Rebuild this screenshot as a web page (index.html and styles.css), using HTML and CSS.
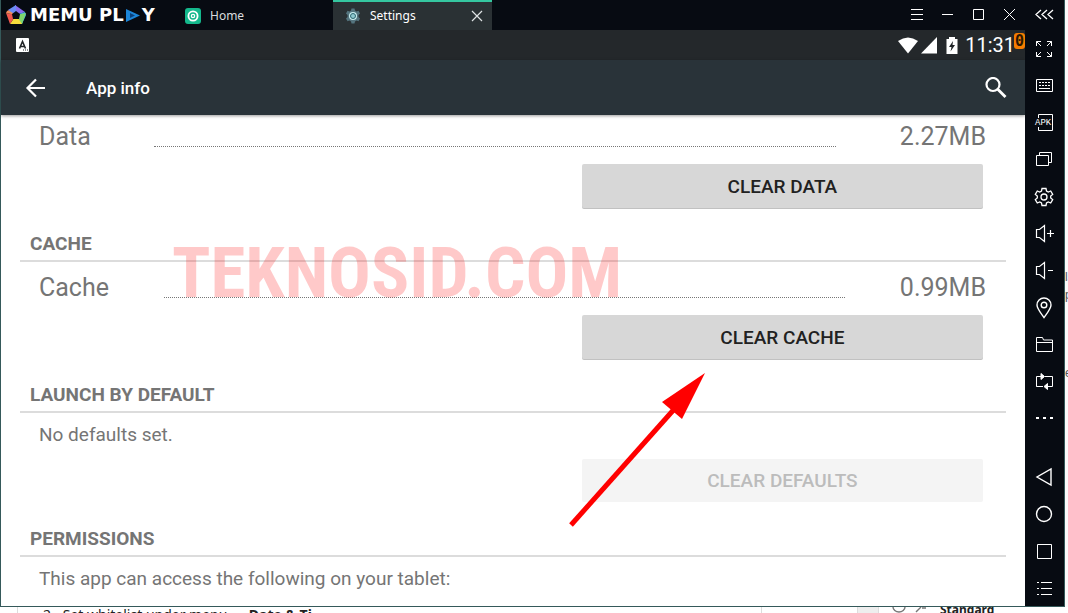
FILE: index.html
```html
<!DOCTYPE html>
<html lang="en">
<head>
    <meta charset="UTF-8">
    <meta name="viewport" content="width=device-width, initial-scale=1.0">
    <link rel="stylesheet" href="styles.css">
    <title>App info</title>
</head>
<body>
    <div class="desktop">
        <div class="window">
            <div class="main">
                <header class="titlebar">
                    <div class="brand">
                        <svg class="brand-logo" width="22" height="22" viewBox="0 0 22 22">
                            <path d="M11 11L10 1L20 8Z" fill="#8b6cf0"/>
                            <path d="M11 11L20 8L21 11L17 20Z" fill="#46b4ef"/>
                            <path d="M11 11L21 9L17 20L14 20Z" fill="#7ed66b"/>
                            <path d="M11 11L17 20L5 20Z" fill="#f6dc3c"/>
                            <path d="M11 11L5 20L1 9Z" fill="#f0574e"/>
                            <path d="M11 11L1 9L2 7L6 5Z" fill="#f08a5a"/>
                            <path d="M11 11L3 6L11 1Z" fill="#6a8cf5"/>
                            <path d="M11 7L15 10L14 15H8L7 10Z" fill="#070b12"/>
                        </svg>
                        <span class="brand-name">MEMU&nbsp;PL<svg width="14" height="13" viewBox="0 0 14 13"><path d="M0 0L14 6.5L0 13Z" fill="#1c86d9"/><path d="M4 4L9 6.5L4 9Z" fill="#0b3f78"/></svg>Y</span>
                    </div>
                    <nav class="tabs">
                        <button type="button" class="tab">
                            <svg width="16" height="16" viewBox="0 0 16 16">
                                <rect width="16" height="16" rx="3" fill="#14b88c"/>
                                <circle cx="8" cy="8" r="5.5" fill="#fff"/>
                                <circle cx="8" cy="8" r="3" fill="none" stroke="#14b88c" stroke-width="1.4"/>
                                <circle cx="8" cy="8" r="1" fill="#14b88c"/>
                            </svg>
                            <span>Home</span>
                        </button>
                        <button type="button" class="tab active">
                            <svg width="16" height="16" viewBox="0 0 16 16">
                                <path d="M6.5 .5h3l.5 2 1.5.9 2-.6 1.5 2.6-1.5 1.5v2.2l1.5 1.5-1.5 2.6-2-.6-1.5.9-.5 2h-3l-.5-2-1.5-.9-2 .6L1 10.6l1.5-1.5V6.9L1 5.4l1.5-2.6 2 .6L6 2.5z" fill="#54747e"/>
                                <circle cx="8" cy="8" r="4" fill="#c9eef0"/>
                                <circle cx="8" cy="8" r="2.5" fill="#8fc9cf" stroke="#2d6670"/>
                            </svg>
                            <span>Settings</span>
                            <svg class="tab-close" width="12" height="12" viewBox="0 0 12 12"><path d="M1 1L11 11M11 1L1 11" stroke="#dfe3e4" stroke-width="1.2"/></svg>
                        </button>
                    </nav>
                    <div class="controls">
                        <button type="button" aria-label="Menu"><svg width="14" height="14" viewBox="0 0 14 14"><path d="M2 1.5h12M2 6.5h12M2 11.5h12"/></svg></button>
                        <button type="button" aria-label="Minimize"><svg width="14" height="14" viewBox="0 0 14 14"><path d="M2 6.5h11"/></svg></button>
                        <button type="button" aria-label="Maximize"><svg width="14" height="14" viewBox="0 0 14 14"><path d="M2.5 1.5h10v10h-10z"/></svg></button>
                        <button type="button" aria-label="Close"><svg width="14" height="14" viewBox="0 0 14 14"><path d="M2 1L13 12M13 1L2 12"/></svg></button>
                    </div>
                </header>

                <div class="statusbar">
                    <svg width="13" height="14" viewBox="0 0 13 14">
                        <rect width="13" height="14" rx="1" fill="#fff"/>
                        <path d="M3.5 10.5L6.500 3.500L9.500 10.500M4.500 8.500h4" fill="none" stroke="#202427" stroke-width="1.600"/>
                        <path d="M7 12h1M9 12h1M11 12h1" stroke="#202427"/>
                    </svg>
                    <div class="status-icons">
                        <svg width="20" height="17" viewBox="0 0 20 17"><path d="M0 4Q10-3 20 4L10 16.500Z" fill="#fff"/></svg>
                        <svg width="16" height="17" viewBox="0 0 16 17"><path d="M16 0V16.500H0Z" fill="#fff"/></svg>
                        <svg class="battery" width="12" height="17" viewBox="0 0 12 17"><path d="M3 2V0h6v2h2.500v15H.5V2Z" fill="#fff"/><path d="M7 4L3 10h2.500L4.500 14.500L9 8H6.500Z" fill="#202427"/></svg>
                        <span class="clock">11:31</span>
                        <span class="fps">0</span>
                    </div>
                </div>

                <div class="actionbar">
                    <button type="button" aria-label="Back"><svg width="20" height="20" viewBox="0 0 20 20"><path d="M20 10H3M11 1.500L2.500 10L11 18.500" fill="none" stroke="#fff" stroke-width="2.200"/></svg></button>
                    <h1>App info</h1>
                    <button type="button" aria-label="Search"><svg width="22" height="22" viewBox="0 0 22 22"><circle cx="8" cy="7.500" r="6.500" fill="none" stroke="#fff" stroke-width="2.200"/><path d="M12.500 12L20.500 20" stroke="#fff" stroke-width="2.800"/></svg></button>
                </div>

                <main class="content">
                    <section>
                        <div class="row"><span>Data</span><i class="dots"></i><span>2.27MB</span></div>
                        <div class="action"><button type="button">CLEAR DATA</button></div>
                    </section>
                    <section>
                        <h2>CACHE</h2>
                        <div class="row"><span>Cache</span><i class="dots"></i><span>0.99MB</span></div>
                        <div class="action"><button type="button">CLEAR CACHE</button></div>
                        <div class="watermark">TEKNOSID.COM</div>
                    </section>
                    <section>
                        <h2>LAUNCH BY DEFAULT</h2>
                        <p>No defaults set.</p>
                        <div class="action"><button type="button" disabled>CLEAR DEFAULTS</button></div>
                    </section>
                    <section>
                        <h2>PERMISSIONS</h2>
                        <p>This app can access the following on your tablet:</p>
                    </section>
                    <svg class="arrow" width="136" height="154" viewBox="0 0 136 154">
                        <path d="M2 152L108 33" stroke="#f00" stroke-width="5"/>
                        <path d="M136 0L93 29L113 46Z" fill="#f00"/>
                    </svg>
                </main>
            </div>

            <aside class="sidebar">
                <button type="button" class="collapse" aria-label="Collapse"><svg width="20" height="20" viewBox="0 0 20 20"><path d="M7 5L2 9.500L7 14M13 5L8 9.500L13 14M19 5L14 9.500L19 14" stroke-width="1.300"/></svg></button>
                <button type="button" aria-label="Full screen"><svg width="20" height="20" viewBox="0 0 20 20"><path d="M2.500 7V2.500H7M2.500 2.500L7 7M13 2.500h4.500V7M17.500 2.500L13 7M2.500 13v4.500H7M2.500 17.500L7 13M17.500 13v4.500H13M17.500 17.500L13 13"/></svg></button>
                <button type="button" aria-label="Keyboard"><svg width="20" height="20" viewBox="0 0 20 20"><path d="M2.500 3.500h16v12h-16z"/><path d="M5 6.500h12M5 9.500h12" stroke-dasharray="2 1"/><path d="M5 12.500h11"/></svg></button>
                <button type="button" aria-label="Install APK"><svg width="20" height="20" viewBox="0 0 20 20"><path d="M4.500 5V1.500h14v16h-14V14"/><text x="1" y="12" class="apk">APK</text></svg></button>
                <button type="button" aria-label="Multi window"><svg width="20" height="20" viewBox="0 0 20 20"><path d="M2.500 5.500h12v10h-12zM5.500 5.500v-3h12v10h-3"/></svg></button>
                <button type="button" aria-label="Settings"><svg width="20" height="20" viewBox="0 0 20 20"><path d="M8 1.500h4l.5 2.500 1.800 1 2.400-1 2 3.400-2 1.600v2l2 1.600-2 3.400-2.400-1-1.800 1-.5 2.500H8L7.500 16l-1.800-1-2.400 1-2-3.400 2-1.600V9l-2-1.600 2-3.400 2.400 1 1.800-1z" stroke-width="1.300"/><circle cx="10" cy="10" r="3" stroke-width="1.300"/></svg></button>
                <button type="button" aria-label="Volume up"><svg width="20" height="20" viewBox="0 0 20 20"><path d="M2.500 5.500h3L10.500 1.500v16L5.500 13.500h-3zM13 9.500h7M16.500 6v7" stroke-width="1.200"/></svg></button>
                <button type="button" aria-label="Volume down"><svg width="20" height="20" viewBox="0 0 20 20"><path d="M2.500 5.500h3L10.500 1.500v16L5.500 13.500h-3zM14 9.500h5" stroke-width="1.200"/></svg></button>
                <button type="button" aria-label="Location"><svg width="20" height="22" viewBox="0 0 20 22"><path d="M10 20.500C6 15 3 11.500 3 8a7 7 0 0 1 14 0c0 3.500-3 7-7 12.500z" stroke-width="1.400"/><circle cx="10" cy="8" r="2.800" stroke-width="1.400"/></svg></button>
                <button type="button" aria-label="Files"><svg width="20" height="20" viewBox="0 0 20 20"><path d="M2.500 16.500v-14h6l1 2.500h9v11.500zM2.500 7.500h16"/></svg></button>
                <button type="button" aria-label="Rotate"><svg width="20" height="20" viewBox="0 0 20 20"><path d="M5 14.500H2.500v-10H7M11 4.500h7.500v10H14M2.500 14.500H9"/><path d="M7 1.500L10.500 4.500L7 7.500ZM13.500 11.500L10 14.500L13.500 17.500Z" fill="#fff"/></svg></button>
                <button type="button" aria-label="More"><svg width="20" height="20" viewBox="0 0 20 20"><path d="M2 9h3M9 9h3M16 9h3" stroke-width="2"/></svg></button>
                <div class="nav-keys">
                    <button type="button" aria-label="Back"><svg width="20" height="20" viewBox="0 0 20 20"><path d="M17 2v16L3 10z" stroke-width="1.400"/></svg></button>
                    <button type="button" aria-label="Home"><svg width="20" height="20" viewBox="0 0 20 20"><circle cx="10" cy="10" r="7.500" stroke-width="1.400"/></svg></button>
                    <button type="button" aria-label="Recent"><svg width="20" height="20" viewBox="0 0 20 20"><path d="M3.500 3.500h14v14h-14z"/></svg></button>
                    <button type="button" aria-label="List"><svg width="20" height="20" viewBox="0 0 20 20"><path d="M3 4.500h2M7 4.500h11M3 10.500h2M7 10.500h11M3 16.500h2M7 16.500h11"/></svg></button>
                </div>
            </aside>
        </div>

        <div class="behind-right">
            <span class="mark">ls</span>
            <span class="mark">p</span>
            <span class="mark gap">e</span>
        </div>
    </div>

    <div class="behind-bottom">
        <div class="doc"><span>2.</span><span class="step">Set whitelist under menu</span><b>Date &amp; Ti</b></div>
        <div class="doc-edge"></div>
        <div class="panel">
            <svg width="34" height="6" viewBox="0 0 34 6"><path d="M1 0a6 5 0 0 0 12 0M24 5l5-5M30 1h4" fill="none" stroke="#777" stroke-width="1.400"/></svg>
            <b>Standard</b>
        </div>
    </div>
</body>
</html>
```
FILE: styles.css
```css
* {
    box-sizing: border-box;
}

body {
    margin: 0;
    background: #fff;
    font-family: Roboto, "Liberation Sans", sans-serif;
    color: #757575;
    overflow: hidden;
}

h1, h2, p {
    margin: 0;
}

button {
    padding: 0;
    border: none;
    background: none;
    color: inherit;
    font: inherit;
    cursor: pointer;
}

svg {
    display: block;
    flex: none;
}

.desktop {
    display: flex;
}

/* Emulator window */
.window {
    display: flex;
    flex: 1;
    border: 1px solid #35595a;
    border-top: none;
    background: #fff;
}

.main {
    flex: 1;
}

/* Title bar with tabs */
.titlebar {
    display: flex;
    height: 30px;
    background: #070b12;
    color: #fff;
}

.brand {
    display: flex;
    align-items: center;
    gap: 3px;
    width: 172px;
    padding-left: 4px;
}

.brand-name {
    display: flex;
    align-items: center;
    gap: 2px;
    font: bold 18px/20px "DejaVu Sans", sans-serif;
}

.tabs {
    display: flex;
    flex: 1;
    font: 12px/16px "Noto Sans", sans-serif;
}

.tab {
    display: flex;
    align-items: center;
    gap: 9px;
    width: 160px;
    padding: 0 9px 0 12px;
    border-top: 2px solid transparent;
    color: #d9dcde;
}

.tab.active {
    width: 159px;
    background: #2a3134;
    border-top-color: #35c7a0;
    color: #fff;
}

.tab-close {
    margin-left: auto;
}

.controls {
    display: flex;
    padding-right: 1px;
}

.controls button {
    display: flex;
    align-items: center;
    justify-content: center;
    width: 31px;
}

.controls svg,
.sidebar svg {
    fill: none;
    stroke: #fff;
}

/* Android status bar */
.statusbar {
    display: flex;
    align-items: center;
    justify-content: space-between;
    height: 30px;
    padding-left: 15px;
    background: #24282b;
    color: #fff;
}

.status-icons {
    display: flex;
    align-items: center;
    gap: 3px;
}

.battery {
    margin: 0 4px 0 6px;
}

.clock {
    font-size: 20px;
    line-height: 30px;
}

.fps {
    align-self: flex-start;
    margin: 3px 0 0 -4px;
    padding: 0 1px;
    border-radius: 3px;
    background: #f57c00;
    color: #2b1600;
    font: bold 15px/16px "DejaVu Sans Mono", monospace;
}

/* Action bar */
.actionbar {
    display: flex;
    align-items: center;
    height: 55px;
    padding: 0 18px 0 24px;
    background: #293339;
    color: #fff;
    box-shadow: 0 1px 3px rgba(0, 0, 0, 0.4);
}

.actionbar h1 {
    flex: 1;
    margin-left: 41px;
    font-size: 17px;
    font-weight: 500;
}

/* Settings list */
.content {
    position: relative;
    padding: 6px 19px 14px;
    font-size: 19px;
    line-height: 26px;
}

.content section {
    position: relative;
}

.content h2 {
    padding: 0 10px 3px;
    border-bottom: 2px solid #dcdcdc;
    font-size: 19px;
    font-weight: 700;
}

.content p {
    padding: 9px 19px 0;
}

.row {
    display: flex;
    justify-content: space-between;
    padding: 0 20px 0 19px;
    font-size: 25px;
    line-height: 32px;
}

h2 + .row {
    margin-top: 10px;
}

.dots {
    width: 72%;
    height: 26px;
    border-bottom: 1px dotted #777;
}

.action {
    display: flex;
    justify-content: flex-end;
    margin-bottom: 22px;
    padding: 11px 23px 0 19px;
}

.action button {
    width: 42.5%;
    height: 45px;
    border-radius: 2px;
    background: #d7d7d7;
    box-shadow: inset 0 -1px 0 rgba(0, 0, 0, 0.1);
    color: #212121;
    font-weight: 500;
}

.action button:disabled {
    height: 43px;
    margin-bottom: 2px;
    background: #f4f4f4;
    box-shadow: none;
    color: #bcbcbc;
}

.watermark {
    position: absolute;
    top: 6px;
    left: 152px;
    color: rgba(255, 0, 0, 0.21);
    font: bold 71px/72px "Roboto Condensed", "Liberation Sans Narrow", Roboto, sans-serif;
    pointer-events: none;
}

.arrow {
    position: absolute;
    top: 258px;
    left: 568px;
    pointer-events: none;
}

/* Tool strip */
.sidebar {
    display: flex;
    flex-direction: column;
    width: 39px;
    background: #070b12;
}

.sidebar button {
    display: flex;
    align-items: center;
    justify-content: center;
    width: 38px;
    height: 37px;
}

.sidebar .collapse {
    height: 30px;
}

.sidebar .apk {
    fill: #fff;
    stroke: none;
    font: 9px "Liberation Mono", monospace;
}

.nav-keys {
    margin-top: auto;
}

/* Page behind the window */
.behind-right {
    width: 3px;
    padding-top: 268px;
    overflow: hidden;
    background: #fafafa;
    color: #555;
    font: 12px/18px "Liberation Sans", sans-serif;
}

.mark {
    display: block;
}

.mark.gap {
    margin-top: 60px;
}

.behind-bottom {
    display: flex;
    height: 6px;
    overflow: hidden;
    background: #fff;
    color: #222;
    font: 14px/16px "Noto Sans", sans-serif;
}

.doc {
    display: flex;
    flex: 1;
    margin-left: 17px;
    padding-left: 25px;
    border: 1px solid #ddd;
    border-width: 0 1px;
}

.step {
    width: 186px;
    margin-left: 8px;
    white-space: nowrap;
}

.doc-edge {
    width: 22px;
    margin-left: 95px;
    border: 1px solid #ddd;
    border-width: 0 1px;
    background: #eee;
}

.panel {
    display: flex;
    gap: 14px;
    width: 189px;
    padding-left: 13px;
    font-size: 12px;
    line-height: 6px;
}
```
